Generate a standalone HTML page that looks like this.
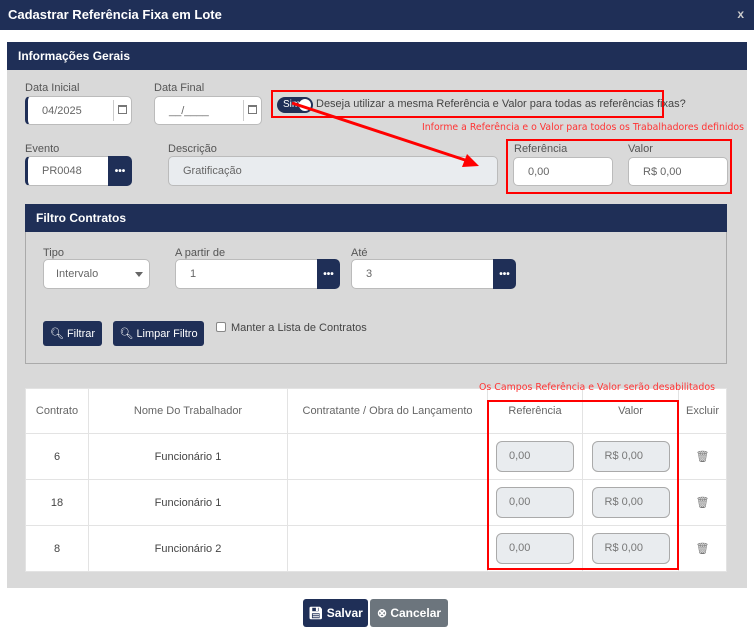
<!DOCTYPE html>
<html><head><meta charset="utf-8">
<style>
*{box-sizing:border-box;margin:0;padding:0}
body{width:754px;height:637px;position:relative;background:#fff;font-family:"Liberation Sans",sans-serif;font-size:11px;color:#555;overflow:hidden}
.a{position:absolute}
.hdr{background:#1f2f57;color:#fff;font-weight:bold}
.lbl{position:absolute;font-size:11px;color:#555}
.inp{position:absolute;background:#fff;border:1px solid #bbb;border-radius:5px;color:#666;font-size:11px;padding-left:14px;display:flex;align-items:center}
.dis{background:#e9ecef}
.btn{position:absolute;background:#1f2f57;color:#fff;border-radius:3px;display:flex;align-items:center;justify-content:center;font-size:11px}
.dots{position:absolute;background:#1f2f57;color:#fff;display:flex;align-items:center;justify-content:center;font-weight:bold;font-size:10px;border-radius:0 5px 5px 0}
.red{position:absolute;border:2px solid #f00}
table{position:absolute;left:25px;top:388px;width:702px;border-collapse:collapse;background:#fff}
td,th{border:1px solid #e3e3e3;text-align:center;font-size:11px;color:#444;font-weight:normal}
th{height:45px;color:#666}
td{height:46px}
.ci{display:inline-block;width:78px;height:31px;border:1px solid #aaa;border-radius:6px;background:#e9ecef;text-align:left;padding-left:12px;line-height:29px;color:#777}
.cal{position:absolute;width:9px;height:9px;border:1px solid #777;border-top-width:2px}
</style></head><body>
<div class="a hdr" style="left:0;top:0;width:754px;height:30px;font-size:13px;padding:7px 0 0 8px">Cadastrar Referência Fixa em Lote<span style="position:absolute;right:10px;top:7px;font-size:12px;color:#ccc">x</span></div>
<div class="a" style="left:7px;top:42px;width:740px;height:546px;background:#d9d9d9"></div>
<div class="a hdr" style="left:7px;top:42px;width:740px;height:28px;font-size:12px;padding:7px 0 0 11px">Informações Gerais</div>

<div class="lbl" style="left:25px;top:82px">Data Inicial</div>
<div class="inp" style="left:25px;top:96px;width:107px;height:29px;border-left:3px solid #1f2f57">04/2025</div>
<div class="a" style="left:113px;top:100px;width:1px;height:21px;background:#ccc"></div>
<div class="cal" style="left:118px;top:105px"></div>
<div class="lbl" style="left:154px;top:82px">Data Final</div>
<div class="inp" style="left:154px;top:96px;width:108px;height:29px">__/____</div>
<div class="a" style="left:243px;top:100px;width:1px;height:21px;background:#ccc"></div>
<div class="cal" style="left:248px;top:105px"></div>

<div class="red" style="left:271px;top:90px;width:393px;height:28px"></div>
<div class="a" style="left:277px;top:97px;width:36px;height:16px;border-radius:8px;background:#1f2f57;color:#fff;font-size:10px;padding:2px 0 0 6px">Sim<span style="position:absolute;right:2px;top:2px;width:12px;height:12px;border-radius:6px;background:#fff"></span></div>
<div class="lbl" style="left:316px;top:98px;color:#444">Deseja utilizar a mesma Referência e Valor para todas as referências fixas?</div>

<div class="lbl" style="left:25px;top:143px">Evento</div>
<div class="inp" style="left:25px;top:156px;width:85px;height:30px;border-left:3px solid #1f2f57;border-radius:5px 0 0 5px">PR0048</div>
<div class="dots" style="left:108px;top:156px;width:24px;height:30px">•••</div>
<div class="lbl" style="left:168px;top:143px">Descrição</div>
<div class="inp dis" style="left:168px;top:156px;width:330px;height:30px">Gratificação</div>
<div class="red" style="left:506px;top:139px;width:226px;height:55px"></div>
<div class="lbl" style="left:514px;top:143px">Referência</div>
<div class="inp" style="left:513px;top:157px;width:100px;height:29px">0,00</div>
<div class="lbl" style="left:628px;top:143px">Valor</div>
<div class="inp" style="left:628px;top:157px;width:100px;height:29px">R$ 0,00</div>

<div class="a" style="left:25px;top:204px;width:702px;height:160px;border:1px solid #aaa;background:#d9d9d9"></div>
<div class="a hdr" style="left:25px;top:204px;width:702px;height:28px;font-size:12px;padding:7px 0 0 11px">Filtro Contratos</div>
<div class="lbl" style="left:43px;top:247px">Tipo</div>
<div class="inp" style="left:43px;top:259px;width:107px;height:30px;padding-left:12px">Intervalo<span style="position:absolute;right:6px;top:12px;border:4px solid transparent;border-top:5px solid #666"></span></div>
<div class="lbl" style="left:175px;top:247px">A partir de</div>
<div class="inp" style="left:175px;top:259px;width:144px;height:30px;border-radius:5px 0 0 5px">1</div>
<div class="dots" style="left:317px;top:259px;width:23px;height:30px">•••</div>
<div class="lbl" style="left:351px;top:247px">Até</div>
<div class="inp" style="left:351px;top:259px;width:144px;height:30px;border-radius:5px 0 0 5px">3</div>
<div class="dots" style="left:493px;top:259px;width:23px;height:30px">•••</div>
<div class="btn" style="left:43px;top:321px;width:59px;height:25px">🔍︎&nbsp;Filtrar</div>
<div class="btn" style="left:113px;top:321px;width:91px;height:25px">🔍︎&nbsp;Limpar Filtro</div>
<div class="a" style="left:216px;top:322px;width:10px;height:10px;border:1px solid #888;background:#fff;border-radius:2px"></div>
<div class="lbl" style="left:231px;top:322px;color:#444">Manter a Lista de Contratos</div>

<table>
<tr><th style="width:63px">Contrato</th><th style="width:199px">Nome Do Trabalhador</th><th style="width:200px">Contratante / Obra do Lançamento</th><th style="width:95px">Referência</th><th style="width:96px">Valor</th><th>Excluir</th></tr>
<tr><td>6</td><td>Funcionário 1</td><td></td><td><span class="ci">0,00</span></td><td><span class="ci">R$ 0,00</span></td><td style="color:#777">🗑︎</td></tr>
<tr><td>18</td><td>Funcionário 1</td><td></td><td><span class="ci">0,00</span></td><td><span class="ci">R$ 0,00</span></td><td style="color:#777">🗑︎</td></tr>
<tr><td>8</td><td>Funcionário 2</td><td></td><td><span class="ci">0,00</span></td><td><span class="ci">R$ 0,00</span></td><td style="color:#777">🗑︎</td></tr>
</table>
<div class="red" style="left:487px;top:400px;width:192px;height:170px"></div>

<svg class="a" style="left:0;top:0;z-index:5" width="754" height="637">
<line x1="292" y1="103" x2="468" y2="161" stroke="#f00" stroke-width="3"/>
<polygon points="479,166 462,167 467,154" fill="#f00"/>
<text x="422" y="130" font-family="DejaVu Sans" font-size="10" fill="#f33" textLength="322" lengthAdjust="spacingAndGlyphs">Informe a Referência e o Valor para todos os Trabalhadores definidos</text>
<text x="479" y="390" font-family="DejaVu Sans" font-size="10" fill="#f33" textLength="236" lengthAdjust="spacingAndGlyphs">Os Campos Referência e Valor serão desabilitados</text>
</svg>

<div class="btn" style="left:303px;top:599px;width:65px;height:28px;font-weight:bold;font-size:12px">💾︎ Salvar</div>
<div class="btn" style="left:370px;top:599px;width:78px;height:28px;background:#6c757d;font-weight:bold;font-size:12px">⊗ Cancelar</div>
</body></html>
